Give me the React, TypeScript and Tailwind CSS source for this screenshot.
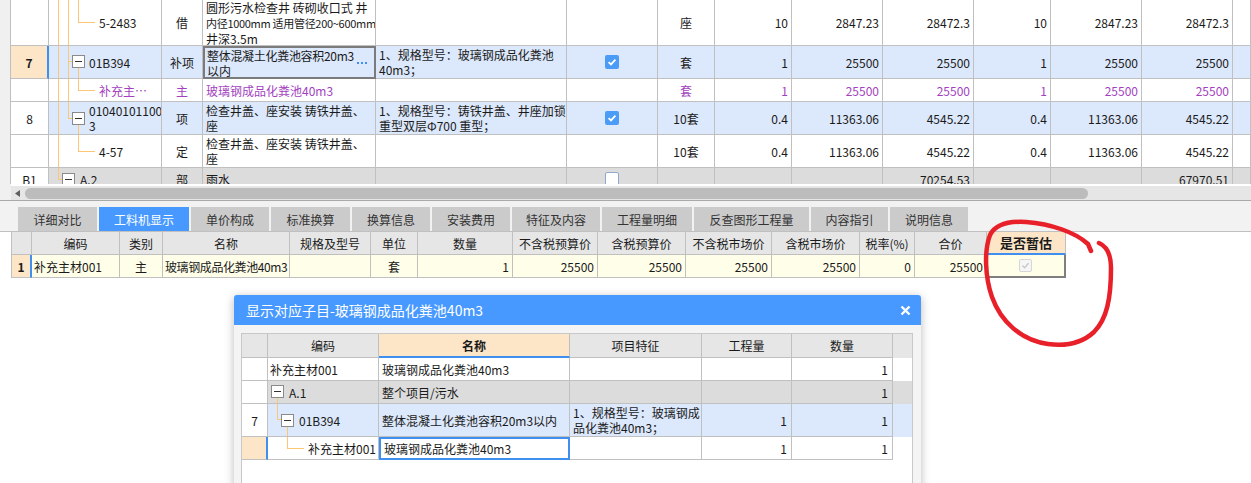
import React from "react";

const TOP_COLS =
  "grid grid-cols-[38px_113px_41px_173px_191px_91px_57px_77px_91px_91px_77px_91px_91px_1fr]";
const LOW_COLS =
  "grid grid-cols-[20px_88px_43px_127px_81px_47px_95px_85px_88px_86px_88px_55px_72px_79px]";
const DLG_COLS = "grid grid-cols-[26px_111px_191px_132px_90px_101px]";

const CELL = "flex items-center overflow-hidden whitespace-nowrap border-b border-r border-[#c0c0c0]";

function Box({ className }: { className: string }) {
  return (
    <span
      className={`absolute z-10 flex h-[13px] w-[13px] items-center justify-center border border-[#8a8a8a] bg-white ${className}`}
    >
      <span className="h-px w-[7px] bg-[#333]" />
    </span>
  );
}

function Checked() {
  return (
    <span className="flex h-[14px] w-[14px] items-center justify-center rounded-[2px] bg-[#4b9cf7]">
      <svg width="10" height="10" viewBox="0 0 10 10">
        <path d="M1.6 5.1 L4 7.4 L8.4 2.6" fill="none" stroke="white" strokeWidth="1.8" />
      </svg>
    </span>
  );
}

function Unchecked() {
  return <span className="h-[14px] w-[14px] rounded-[2px] border border-[#8fa9cc] bg-white" />;
}

function Disabled() {
  return (
    <span className="flex h-[13px] w-[13px] items-center justify-center rounded-[2px] border border-[#d6d6d6] bg-[#f6f6f6]">
      <svg width="9" height="9" viewBox="0 0 10 10">
        <path d="M1.6 5.1 L4 7.4 L8.4 2.6" fill="none" stroke="#c8c8c8" strokeWidth="1.6" />
      </svg>
    </span>
  );
}

type TopRowProps = {
  h: string;
  bg?: string;
  num?: React.ReactNode;
  numCls?: string;
  tree: React.ReactNode;
  type: string;
  name?: React.ReactNode;
  nameCls?: string;
  feature?: React.ReactNode;
  check?: React.ReactNode;
  unit?: string;
  nums: string[];
  purple?: boolean;
};

function TopRow({ h, bg, num, numCls, tree, type, name, nameCls, feature, check, unit, nums, purple }: TopRowProps) {
  return (
    <div className={`${TOP_COLS} ${h} ${bg ?? "bg-white"} ${purple ? "text-[#a33fc0]" : ""}`}>
      <div className={numCls ?? `${CELL} justify-center bg-white text-[#1a1a1a]`}>{num}</div>
      <div className={`${CELL} relative`}>{tree}</div>
      <div className={`${CELL} justify-center`}>{type}</div>
      <div className={nameCls ?? `${CELL} pl-[3px]`}>{name}</div>
      <div className={`${CELL} pl-[3px]`}>{feature}</div>
      <div className={`${CELL} justify-center`}>{check}</div>
      <div className={`${CELL} justify-center`}>{unit}</div>
      {nums.map((n, i) => (
        <div key={i} className={`${CELL} justify-end pr-[3px]`}>
          {n}
        </div>
      ))}
      <div className={CELL} />
    </div>
  );
}

const TABS: [string, string][] = [
  ["详细对比", "w-[79px]"],
  ["工料机显示", "w-[90px]"],
  ["单价构成", "w-[78px]"],
  ["标准换算", "w-[79px]"],
  ["换算信息", "w-[78px]"],
  ["安装费用", "w-[78px]"],
  ["特征及内容", "w-[88px]"],
  ["工程量明细", "w-[90px]"],
  ["反查图形工程量", "w-[115px]"],
  ["内容指引", "w-[77px]"],
  ["说明信息", "w-[78px]"],
];

const LOW_HEAD = [
  "",
  "编码",
  "类别",
  "名称",
  "规格及型号",
  "单位",
  "数量",
  "不含税预算价",
  "含税预算价",
  "不含税市场价",
  "含税市场价",
  "税率(%)",
  "合价",
];

const TREE = "absolute bg-[#fbc774]";

export default function App() {
  return (
    <div className="relative h-[483px] w-[1251px] overflow-hidden bg-white font-['Noto_Sans_CJK_SC',sans-serif] text-[12px] leading-[15px] text-[#1a1a1a]">
      {/* upper list */}
      <div className="flex h-[184px]">
        <div className="w-[11px] shrink-0 border-r border-[#c0c0c0] bg-[#f0f0f0]" />
        <div className="flex-1 overflow-hidden">
          <TopRow
            h="h-[46px]"
            tree={
              <>
                <i className={`${TREE} left-[9px] top-0 bottom-0 w-px`} />
                <i className={`${TREE} left-[19px] top-0 bottom-0 w-px`} />
                <i className={`${TREE} left-[29px] top-0 h-[22px] w-px`} />
                <i className={`${TREE} left-[29px] top-[22px] h-px w-[17px]`} />
                <span className="relative pl-[50px]">5-2483</span>
              </>
            }
            type="借"
            name={
              <span>
                圆形污水检查井 砖砌收口式 井<br />
                <span className="text-[11px] tracking-[-0.3px]">内径1000mm 适用管径200~600mm</span>
                <br />
                井深3.5m
              </span>
            }
            unit="座"
            nums={["10", "2847.23", "28472.3", "10", "2847.23", "28472.3"]}
          />
          <TopRow
            h="h-[33px]"
            bg="bg-[#dce8fb]"
            num="7"
            numCls="flex items-center justify-center border-b border-b-[#c0c0c0] border-r-2 border-r-[#3f8ff0] bg-[#fde6c8] font-bold"
            tree={
              <>
                <i className={`${TREE} left-[9px] top-0 bottom-0 w-px`} />
                <i className={`${TREE} left-[19px] top-0 bottom-0 w-px`} />
                <i className={`${TREE} left-[19px] top-[15px] h-px w-[4px]`} />
                <i className={`${TREE} left-[29px] top-[22px] bottom-0 w-px`} />
                <Box className="left-[23px] top-[9px]" />
                <span className="relative pl-[40px]">01B394</span>
              </>
            }
            type="补项"
            name={
              <>
                <span className="flex-1">
                  <span className="tracking-[-0.3px]">整体混凝土化粪池容积20m3</span>
                  <br />
                  以内
                </span>
                <span className="mr-[7px] flex gap-[2px]">
                  <i className="h-[2px] w-[2px] bg-[#3f8ff0]" />
                  <i className="h-[2px] w-[2px] bg-[#3f8ff0]" />
                  <i className="h-[2px] w-[2px] bg-[#3f8ff0]" />
                </span>
              </>
            }
            nameCls="flex items-center overflow-hidden whitespace-nowrap border-2 border-[#7b7b7b] pl-[2px]"
            feature={
              <span>
                1、规格型号：玻璃钢成品化粪池
                <br />
                40m3；
              </span>
            }
            check={<Checked />}
            unit="套"
            nums={["1", "25500", "25500", "1", "25500", "25500"]}
          />
          <TopRow
            h="h-[23px]"
            purple
            tree={
              <>
                <i className={`${TREE} left-[9px] top-0 bottom-0 w-px`} />
                <i className={`${TREE} left-[19px] top-0 bottom-0 w-px`} />
                <i className={`${TREE} left-[29px] top-0 h-[11px] w-px`} />
                <i className={`${TREE} left-[29px] top-[11px] h-px w-[17px]`} />
                <span className="relative pl-[50px]">补充主…</span>
              </>
            }
            type="主"
            name="玻璃钢成品化粪池40m3"
            unit="套"
            nums={["1", "25500", "25500", "1", "25500", "25500"]}
          />
          <TopRow
            h="h-[33px]"
            bg="bg-[#dce8fb]"
            num="8"
            tree={
              <>
                <i className={`${TREE} left-[9px] top-0 bottom-0 w-px`} />
                <i className={`${TREE} left-[19px] top-0 h-[16px] w-px`} />
                <i className={`${TREE} left-[19px] top-[16px] h-px w-[4px]`} />
                <i className={`${TREE} left-[29px] top-[23px] bottom-0 w-px`} />
                <Box className="left-[23px] top-[10px]" />
                <span className="relative pl-[40px]">
                  01040101100
                  <br />3
                </span>
              </>
            }
            type="项"
            name={
              <span>
                检查井盖、座安装 铸铁井盖、
                <br />座
              </span>
            }
            feature={
              <span>
                1、规格型号：铸铁井盖、井座加锁
                <br />
                重型双层Φ700 重型；
              </span>
            }
            check={<Checked />}
            unit="10套"
            nums={["0.4", "11363.06", "4545.22", "0.4", "11363.06", "4545.22"]}
          />
          <TopRow
            h="h-[33px]"
            tree={
              <>
                <i className={`${TREE} left-[9px] top-0 bottom-0 w-px`} />
                <i className={`${TREE} left-[29px] top-0 h-[16px] w-px`} />
                <i className={`${TREE} left-[29px] top-[16px] h-px w-[17px]`} />
                <span className="relative pl-[50px]">4-57</span>
              </>
            }
            type="定"
            name={
              <span>
                检查井盖、座安装 铸铁井盖、
                <br />座
              </span>
            }
            unit="10套"
            nums={["0.4", "11363.06", "4545.22", "0.4", "11363.06", "4545.22"]}
          />
          <TopRow
            h="h-[23px]"
            bg="bg-[#dcdcdc]"
            num="B1"
            tree={
              <>
                <i className={`${TREE} left-[9px] top-0 h-[11px] w-px`} />
                <i className={`${TREE} left-[9px] top-[11px] h-px w-[4px]`} />
                <Box className="left-[13px] top-[5px]" />
                <span className="relative pl-[31px]">A.2</span>
              </>
            }
            type="部"
            name="雨水"
            check={<Unchecked />}
            nums={["", "", "70254.53", "", "", "67970.51"]}
          />
        </div>
      </div>

      {/* horizontal scrollbar */}
      <div className="flex h-[16px]">
        <div className="w-[11px] shrink-0 bg-[#f0f0f0]" />
        <div className="flex flex-1 items-center border-t-2 border-white bg-[#e6e6e6]">
          <svg width="5" height="7" viewBox="0 0 5 7" className="ml-[4px]">
            <path d="M5 0 L0 3.5 L5 7 Z" fill="#606060" />
          </svg>
          <div className="ml-[5px] h-[11px] w-[1063px] rounded-full bg-[#bcbcbc]" />
        </div>
      </div>

      {/* tabs */}
      <div className="flex h-[32px] items-end gap-[2px] border-t border-b border-t-[#a9a9a9] border-b-[#c0c0c0] bg-[#f2f2f2] pl-[18px]">
        {TABS.map(([label, w]) => (
          <div
            key={label}
            className={`flex h-[24px] items-center justify-center ${w} ${
              label === "工料机显示" ? "bg-[#4799ff] text-white" : "bg-[#cbcbcb] text-[#333]"
            }`}
          >
            {label}
          </div>
        ))}
      </div>

      {/* resource table */}
      <div className="ml-[11px] w-[1055px] border-l border-[#c0c0c0]">
        <div className={`${LOW_COLS} h-[23px] bg-[#e6e6e6]`}>
          {LOW_HEAD.map((t, i) => (
            <div key={i} className={`${CELL} justify-center`}>
              {t}
            </div>
          ))}
          <div className="flex items-center justify-center border-r border-r-[#c0c0c0] border-b-2 border-b-[#3f8ff0] bg-[#fde6c8] text-[13px] font-bold">
            是否暂估
          </div>
        </div>
        <div className={`${LOW_COLS} h-[23px] bg-[#fffee8]`}>
          <div className="flex items-center justify-center border-b border-b-[#c0c0c0] border-r-2 border-r-[#3f8ff0] bg-[#fde6c8] font-bold">
            1
          </div>
          <div className={`${CELL} pl-[2px]`}>补充主材001</div>
          <div className={`${CELL} justify-center`}>主</div>
          <div className={`${CELL} pl-[2px] tracking-[-0.4px]`}>玻璃钢成品化粪池40m3</div>
          <div className={CELL} />
          <div className={`${CELL} justify-center`}>套</div>
          {["1", "25500", "25500", "25500", "25500", "0", "25500"].map((n, i) => (
            <div key={i} className={`${CELL} justify-end pr-[3px]`}>
              {n}
            </div>
          ))}
          <div className="flex items-center justify-center border-r-2 border-b-2 border-[#7f7f7f]">
            <Disabled />
          </div>
        </div>
      </div>

      {/* popup dialog */}
      <div className="absolute left-[234px] top-[295px] h-[200px] w-[687px] rounded-t-[3px] bg-[#f4f4f4] shadow-[0_2px_10px_rgba(0,0,0,0.28)]">
        <div className="flex h-[30px] items-center justify-between rounded-t-[3px] bg-[#4799ff] pl-[12px] pr-[10px] text-[14px] text-white">
          <span>显示对应子目-玻璃钢成品化粪池40m3</span>
          <svg width="11" height="11" viewBox="0 0 11 11">
            <path d="M1.5 1.5 L9.5 9.5 M9.5 1.5 L1.5 9.5" stroke="white" strokeWidth="2.4" />
          </svg>
        </div>
        <div className="pl-[7px] pr-[8px] pt-[8px]">
          <div className="h-[170px] border border-[#c8c8c8] bg-white">
            <div className={`${DLG_COLS} h-[24px] bg-[#e6e6e6]`}>
              <div className={CELL} />
              <div className={`${CELL} justify-center`}>编码</div>
              <div className="flex items-center justify-center border-r border-r-[#c0c0c0] border-b-2 border-b-[#3f8ff0] bg-[#fde6c8] font-bold">
                名称
              </div>
              <div className={`${CELL} justify-center`}>项目特征</div>
              <div className={`${CELL} justify-center`}>工程量</div>
              <div className={`${CELL} justify-center`}>数量</div>
            </div>
            <div className={`${DLG_COLS} h-[23px]`}>
              <div className={CELL} />
              <div className={`${CELL} pl-[2px]`}>补充主材001</div>
              <div className={`${CELL} pl-[3px]`}>玻璃钢成品化粪池40m3</div>
              <div className={CELL} />
              <div className={CELL} />
              <div className={`${CELL} justify-end pr-[4px]`}>1</div>
            </div>
            <div className={`${DLG_COLS} h-[23px] bg-[#dcdcdc]`}>
              <div className={`${CELL} bg-white`} />
              <div className={`${CELL} relative`}>
                <i className={`${TREE} left-[9px] top-[17px] bottom-0 w-px`} />
                <Box className="left-[3px] top-[4px]" />
                <span className="relative pl-[21px]">A.1</span>
              </div>
              <div className={`${CELL} pl-[3px]`}>整个项目/污水</div>
              <div className={CELL} />
              <div className={CELL} />
              <div className={`${CELL} justify-end pr-[4px]`}>1</div>
            </div>
            <div className={`${DLG_COLS} h-[33px] bg-[#dce8fb]`}>
              <div className={`${CELL} justify-center bg-white`}>7</div>
              <div className={`${CELL} relative`}>
                <i className={`${TREE} left-[9px] top-0 h-[15px] w-px`} />
                <i className={`${TREE} left-[9px] top-[15px] h-px w-[4px]`} />
                <i className={`${TREE} left-[19px] top-[22px] bottom-0 w-px`} />
                <Box className="left-[13px] top-[10px]" />
                <span className="relative pl-[31px]">01B394</span>
              </div>
              <div className={`${CELL} pl-[3px]`}>整体混凝土化粪池容积20m3以内</div>
              <div className={`${CELL} pl-[3px]`}>
                <span>
                  1、规格型号：玻璃钢成
                  <br />
                  品化粪池40m3；
                </span>
              </div>
              <div className={`${CELL} justify-end pr-[4px]`}>1</div>
              <div className={`${CELL} justify-end pr-[4px]`}>1</div>
            </div>
            <div className={`${DLG_COLS} h-[23px]`}>
              <div className="border-b border-b-[#c0c0c0] border-r-2 border-r-[#3f8ff0] bg-[#fde6c8]" />
              <div className={`${CELL} relative`}>
                <i className={`${TREE} left-[19px] top-0 h-[11px] w-px`} />
                <i className={`${TREE} left-[19px] top-[11px] h-px w-[17px]`} />
                <span className="relative pl-[40px]">补充主材001</span>
              </div>
              <div className="flex items-center overflow-hidden whitespace-nowrap border-2 border-[#3f8ff0] pl-[3px]">
                玻璃钢成品化粪池40m3
              </div>
              <div className={CELL} />
              <div className={`${CELL} justify-end pr-[4px]`}>1</div>
              <div className={`${CELL} justify-end pr-[4px]`}>1</div>
            </div>
          </div>
        </div>
      </div>

      {/* hand-drawn red ring */}
      <svg
        className="pointer-events-none absolute left-0 top-0"
        width="1251"
        height="483"
        viewBox="0 0 1251 483"
      >
        <path
          d="M1099 243 C1106 246 1111 253 1111 268 C1111 298 1107 319 1094 332 C1081 344 1063 346 1048 344 C1021 340 1001 322 992 297 C985 277 984 251 990 235 C996 223 1010 221 1026 222 C1051 224 1075 232 1088 244 L1091 251"
          fill="none"
          stroke="#e8202a"
          strokeWidth="4.5"
          strokeLinecap="round"
          strokeLinejoin="round"
        />
      </svg>
    </div>
  );
}
